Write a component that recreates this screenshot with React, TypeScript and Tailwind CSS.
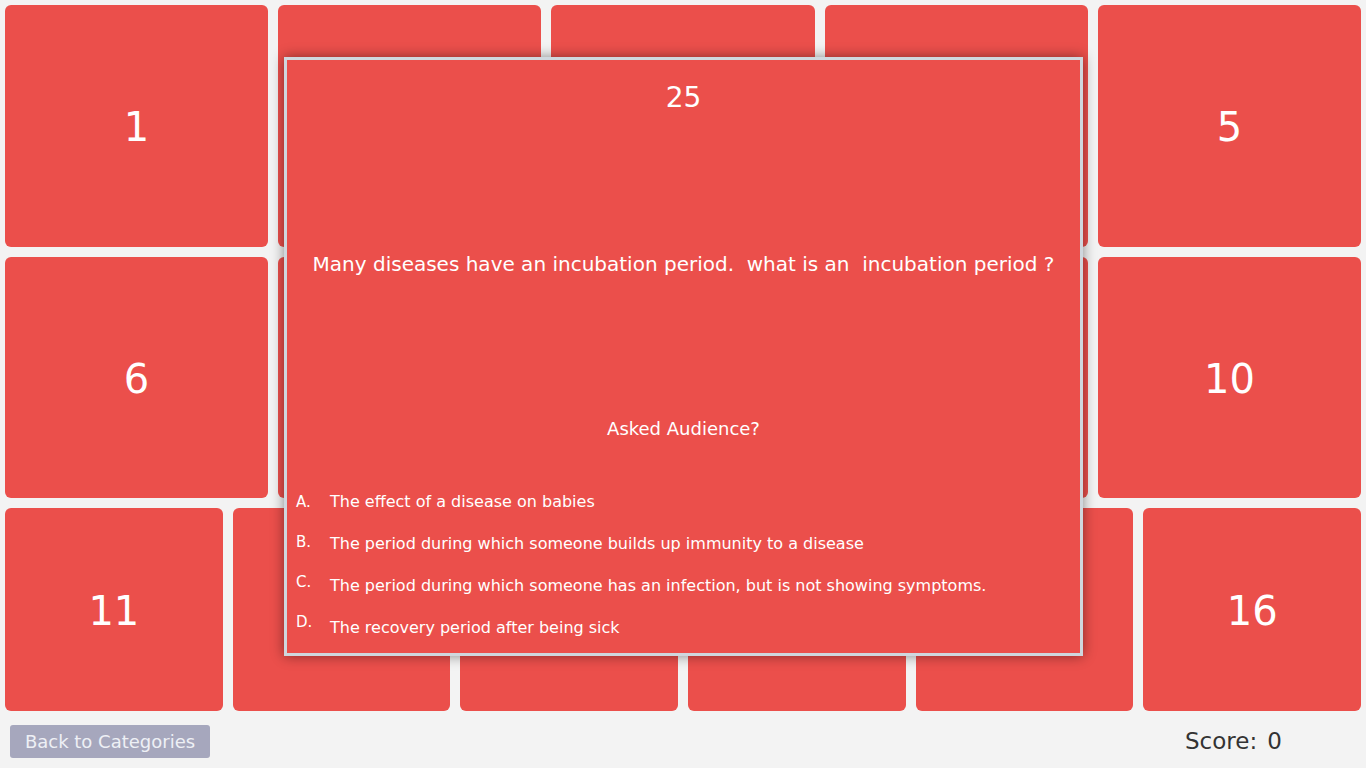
import React from "react";

const topRows = [
  { nums: [1, 2, 3, 4, 5], h: "h-[242px]" },
  { nums: [6, 7, 8, 9, 10], h: "h-[241px]" },
];
const lastRow = [11, 12, 13, 14, 15, 16];

const answers = [
  { letter: "A.", text: "The effect of a disease on babies", lift: "mt-0" },
  { letter: "B.", text: "The period during which someone builds up immunity to a disease", lift: "-mt-[2px]" },
  { letter: "C.", text: "The period during which someone has an infection, but is not showing symptoms.", lift: "-mt-[4px]" },
  { letter: "D.", text: "The recovery period after being sick", lift: "-mt-[6px]" },
];

const Tile = ({ n }: { n: number }) => (
  <div className="flex items-center justify-center rounded-[6px] bg-[#eb4f4b] pt-[2px] text-[40px] text-white">
    {n}
  </div>
);

const QuestionModal = () => (
  <div className="absolute left-[284px] top-[57px] flex h-[599px] w-[799px] flex-col border-[3px] border-[#cfd7de] bg-[#eb4f4b] text-white shadow-[0_0_12px_rgba(0,0,0,0.45)]">
    <div className="pt-[21px] text-center text-[28px] leading-[34px]">25</div>
    <div className="mt-[137px] whitespace-pre text-center text-[20px] leading-[24px]">
      {"Many diseases have an incubation period.  what is an  incubation period ?"}
    </div>
    <div className="mt-[142px] text-center text-[18px] leading-[22px]">Asked Audience?</div>
    <div className="mt-[50px] flex flex-col gap-[18px] pl-[9px]">
      {answers.map((a) => (
        <div key={a.letter} className="flex items-start text-[16px] leading-[24px]">
          <span className={`w-[34px] text-[15px] ${a.lift}`}>{a.letter}</span>
          <span>{a.text}</span>
        </div>
      ))}
    </div>
  </div>
);

export default function App() {
  return (
    <div className="relative h-[768px] w-[1366px] overflow-hidden bg-[#f3f3f3] font-['DejaVu_Sans',sans-serif]">
      <div className="flex flex-col gap-[10px] p-[5px] pb-0">
        {topRows.map((row, i) => (
          <div key={i} className={`grid ${row.h} grid-cols-5 gap-[10px]`}>
            {row.nums.map((n) => (
              <Tile key={n} n={n} />
            ))}
          </div>
        ))}
        <div className="grid h-[203px] grid-cols-6 gap-[10px]">
          {lastRow.map((n) => (
            <Tile key={n} n={n} />
          ))}
        </div>
      </div>
      <div className="flex items-center pl-[10px] pt-[13px]">
        <button className="h-[33px] w-[200px] rounded-[3px] bg-[#a6a7bd] text-[18px] text-[#eef0f5]">
          Back to Categories
        </button>
        <div className="ml-auto w-[181px] text-[23px] text-[#333333]">
          Score:<span className="ml-[10px]">0</span>
        </div>
      </div>
      <QuestionModal />
    </div>
  );
}
